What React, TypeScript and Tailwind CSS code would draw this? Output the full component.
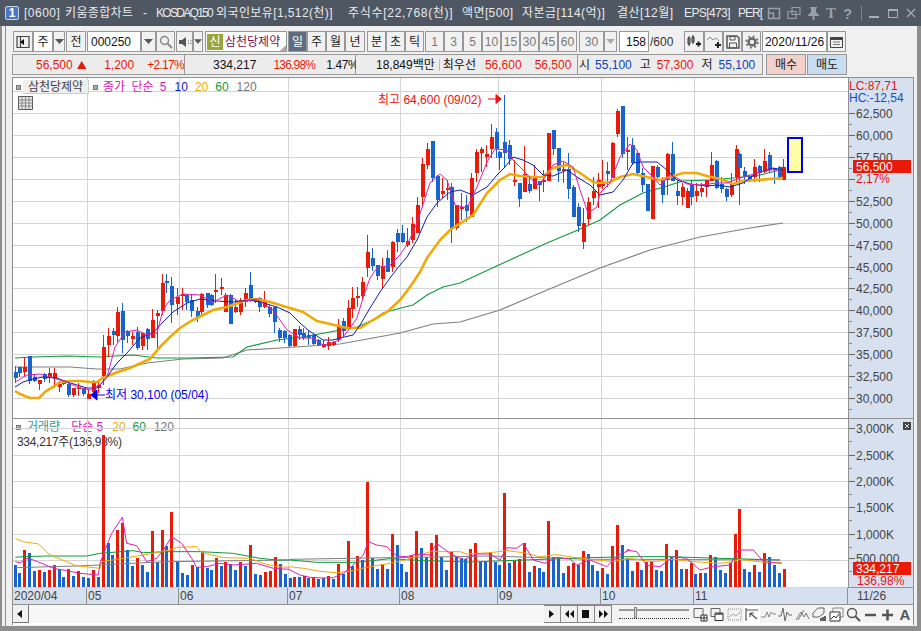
import React from "react";

const RED = "#ea1a08";
const BLUE = "#1763cf";
const FONT = "[font-family:'Liberation_Sans','Noto_Sans_CJK_KR',sans-serif]";

type Candle = { x: number; t: number; b: number; h: number; l: number; r: boolean };
const parseC = (ox: number, oy: number, s: string): Candle[] =>
  s.trim().split(/\s+/).map((e) => {
    const m = e.match(/^(\d+)([rb])(-?\d+),(-?\d+),(-?\d+),(-?\d+)$/)!;
    return {
      x: ox + +m[1] / 3,
      r: m[2] === "r",
      t: oy + +m[3] / 3,
      b: oy + +m[4] / 3,
      h: oy + +m[5] / 3,
      l: oy + +m[6] / 3,
    };
  });

const candles: Candle[] = [
  ...parseC(0, 270, `45b305,325,288,340 58b292,308,290,320 73r290,305,262,318 88b258,332,258,342 103b322,332,312,335 118r330,342,330,360 133b312,328,308,335 148r308,325,295,340 163r310,328,293,355 178r342,350,340,365 190b335,342,335,345 205b342,375,340,380 220r355,375,355,380 235r352,358,340,378 250b355,372,355,378 265r372,386,358,388 280r335,365,330,370 295r345,355,330,370 310r232,318,195,345 325r198,225,175,260 338b183,195,175,225 352r125,198,110,215 367b122,210,100,250 382b183,198,180,220 397r198,208,185,225 412b185,235,170,240 427r188,228,188,240 442b178,208,175,240 457r150,205,118,205 472r128,138,120,235 485r40,122,12,135 498b33,38,12,70 513b47,105,20,160 530r82,103,55,135 545r72,78,55,120 558b75,95,72,120 573b90,122,75,140 590b122,142,110,155 604r72,125,70,135 620b70,105,70,115 633b75,105,72,108 646r60,66,12,100 662r50,58,25,75 676r75,125,70,125 691b75,162,72,162 706r110,125,90,130 721r90,125,85,135 735r68,95,55,110 750b45,90,5,95 765r85,95,85,98 778b85,110,80,125 793r92,112,62,115 808b112,132,105,140 823b112,155,112,190 838b180,205,175,215 853b183,205,180,220 868b195,228,192,232 883r178,228,178,232`),
  ...parseC(90, 260, `628b207,225,197,240 640b220,235,205,240 655b225,235,210,255 670b225,252,222,255 685b240,255,238,258 700r252,260,240,265 715r245,258,232,270 730r245,255,243,257 745r195,240,178,245`),
  ...parseC(340, 235, `10b258,288,250,305 25r220,278,195,285 37r188,222,155,250 52r183,188,155,215 67r140,183,127,195 82r50,98,0,125 97b70,92,40,108 112b90,122,90,135 127r93,133,70,158 142b70,110,45,112 157r20,95,18,110`),
  ...parseC(340, 90, `172b430,455,418,485 185b430,455,405,460 200r452,465,415,470 215r403,450,380,460 230r345,430,320,430 245r222,320,205,350 260r178,225,160,237 275b153,265,153,275 290b258,330,255,350 305r303,312,265,325 320r293,298,270,330 332b292,415,278,458 347r345,415,345,420 362r352,358,310,390 377b345,362,315,395 392r265,380,250,382 407r187,250,178,275 422r177,188,170,245 437r192,200,165,230 452r142,178,102,205 467b125,177,113,205 478b185,205,183,240 493b155,188,15,232 508b165,208,150,225 523r270,275,210,288 538b278,327,278,352 553r252,305,168,305 568b282,302,265,310 583r265,296,225,297 598b272,285,272,332 610r270,272,240,305 625r128,272,128,272 640b120,178,120,195 655b173,242,173,275 670r237,243,215,278 685b237,296,188,328 700b290,380,285,380 715b350,408,338,425 730r400,455,355,477 745r337,388,320,405 758r303,325,262,345 773r270,290,250,355`),
  ...parseC(600, 90, `5r280,288,210,298 22b242,253,215,290 37r160,265,155,265 52r62,132,58,140 67b48,192,48,205 82r180,187,140,240 97b165,218,143,225 110b188,250,185,258 125b250,285,235,305 140b282,362,282,362 155r228,388,228,388 170b232,262,225,270 185b268,315,262,340 200r192,270,190,315 215b192,272,155,272 230b303,318,270,345 245r292,322,278,345 260r303,355,295,355 272b285,322,270,345 287r303,318,280,335 302r293,305,278,320 317r270,290,270,320 332r225,272,185,272 347b212,295,210,298 362b283,297,260,310 377b298,320,295,332 392r283,315,250,320 407r178,262,165,280 417b192,235,190,345 433b243,258,232,282 448b258,270,255,275 463r232,260,208,275 478b228,250,225,275 493r213,245,178,250 508b195,240,185,250 523b235,240,235,282 538b230,265,228,270 550r232,270,208,270`),
];

const parseV = (ox: number, oy: number, s: string) =>
  s.trim().split(/\s+/).map((e) => {
    const m = e.match(/^(\d+)([rb])(-?\d+)$/)!;
    return { x: ox + +m[1] / 3, r: m[2] === "r", t: oy + +m[3] / 3 };
  });

const volumes = [
  ...parseV(0, 500, `46b195 58b218 73r150 88b158 103b212 118r210 133b215 148r210 163r195 178b207 190b230 205r207 220b228 235r212 250b230 265b233 280r210 295b230 310r-195 325b128 337b165 352r90 367r70 382b150 397b197 412r173 427b195 442b215 457r92 472b185 485r90 498b137 513r36 530b185 545b218 560b225 575r195 590b200 605r155 620b204 632b210 647r173 662b197 676r185 691b193 706b210 721r185 736b197 751r135 766b222 779b225 794r215 809r212 824r170 839b192 854b222 869b233`),
  ...parseV(290, 480, `0b293 13r291 28b290 41r287 55b293 70r293 85b297 100b295 115r288 130b297 145r252 160b283 175r183 187b258 202r228 217b240 232r5 247b233 262b267 277r252 292b267 307r162 322b195 334b252 349b276 364r225 379r153 394b204 409b230 424r189 439r165 454b230 469b270 482r215 497b230 512b235 526b238 541r207 556r189 571b245 586b245 601r216 616b245 628b255 643r39 658b249 673r242 688r237 703r189 718b276 733r258 748b264 760b276 775r123 790b232 805b238 820b279 835r258 850r250 865b255 880r213 895b222 907b255 922b273 937r264 952b282 967r198 982r135 997b195`),
  ...parseV(620, 500, `7b135 22b175 37b213 52r185 64b210 79r185 94r182 109b210 124b213 139r132 154b170 169r150 184b207 199r207 212r190 226b222 241r218 256b218 271r165 286b172 301b210 316b218 331r190 346r102 358r27 373b207 388b215 403r195 418b215 433r158 448b172 463b195 478b218 491r207`),
];

const pts = (a: number[]) => {
  let s = "";
  for (let i = 0; i < a.length; i += 2) s += `${a[i]},${a[i + 1]} `;
  return s;
};
const zp = (ox: number, oy: number, a: number[]) => {
  const r: number[] = [];
  for (let i = 0; i < a.length; i += 2) r.push(ox + a[i] / 3, oy + a[i + 1] / 3);
  return r;
};

const ORANGE = [15,391,20,394,30,398,39,398,46,391,55,386,60,382,70,381,80,381,90,382,97,382,103,378,115,373,130,368,150,359,160,347,170,337,180,328,193,320,213,310,227,307,247,300,257,299,270,302,290,308,303,312,317,321,330,324,347,328,360,328,373,320,387,312,400,300,410,287,420,272,427,258,440,240,450,230,473,215,487,193,500,180,510,174,520,176,530,177,543,177,553,168,567,165,580,173,593,182,600,183,610,182,620,177,633,174,647,177,660,180,673,176,683,173,697,173,707,176,720,179,733,184,743,181,757,180,783,178];
const NAVY = [15,387,23,382,33,379,43,377,57,378,67,382,77,385,87,388,97,388,107,377,117,363,127,353,140,338,153,333,163,322,173,312,187,303,200,299,217,301,233,302,250,300,260,302,277,307,290,313,300,323,308,330,317,336,323,340,333,340,340,338,353,335,360,325,370,308,380,292,390,278,400,265,407,257,417,240,427,217,437,203,450,192,460,190,473,195,487,187,497,175,505,167,513,157,523,160,533,165,543,175,553,176,567,170,577,177,590,185,600,195,613,192,623,180,633,163,640,162,657,162,667,170,677,180,690,184,707,186,717,185,730,187,743,183,757,173,773,168,783,170];
const MAG = [15,382,27,375,40,374,53,378,67,382,77,387,90,390,100,385,107,377,115,347,125,332,137,330,147,335,157,333,163,310,170,300,183,294,200,295,213,302,227,295,240,302,257,299,273,310,287,330,300,338,313,338,323,345,333,343,343,337,350,328,357,318,363,298,370,278,377,268,390,265,400,255,408,243,417,223,430,183,440,174,447,180,455,205,467,208,477,187,487,162,495,149,507,150,513,160,523,170,537,185,543,180,553,165,563,161,573,167,580,190,588,213,597,207,600,193,610,183,620,157,630,144,637,150,643,167,653,177,660,185,670,175,677,178,687,184,700,185,717,183,727,183,740,178,757,173,770,170,780,170];
const GREEN = [15,358,33,357,67,356,100,357,133,355,157,358,190,358,233,357,247,347,277,340,303,337,330,332,340,330,357,327,373,320,383,313,397,309,413,305,427,295,443,287,460,283,512,259,547,243,578,230,600,220,620,205,643,193,667,186,683,181,710,180,733,178,760,175,780,170];
const GRAY = [15,367,70,367,97,369,120,369,147,363,183,359,223,358,247,350,280,348,340,344,373,338,400,333,433,324,460,322,500,310,540,293,600,268,650,250,700,237,750,228,783,223];

const vMag = [...zp(0,500,[46,185,60,188,80,175,100,180,130,192,160,205,200,212,240,220,295,225,300,190,315,150,335,100,367,52,380,130,410,137,440,185,470,175,490,150,515,110,545,130,575,175,590,202,620,200,660,190,700,195,770,190,820,205,869,208]),...zp(290,480,[0,270,30,285,60,292,100,294,130,293,160,280,190,255,220,225,235,185,260,195,290,200,320,228,350,230,380,222,420,225,440,190,480,220,520,240,560,222,600,222,630,240,650,203,680,205,700,190,730,240,765,250,800,232,840,237,860,255,900,240,950,260,985,225,1020,210]),...zp(620,500,[20,150,50,155,80,195,120,200,160,170,200,175,240,210,280,200,330,195,355,150,400,150,430,185,485,190])];
const vOra = [...zp(0,500,[46,115,70,125,115,132,150,165,200,185,228,197,300,205,305,185,370,175,430,165,510,150,530,142,590,140,605,158,670,173,750,175,790,190,830,200,869,202]),...zp(290,480,[0,260,40,265,90,274,140,278,190,272,230,262,300,250,345,240,420,215,470,215,510,215,530,222,600,218,650,212,700,218,750,230,800,224,850,232,900,238,970,245,1020,235]),...zp(620,500,[60,180,100,185,160,178,220,185,300,190,340,185,360,178,430,187,485,187])];
const vGrn = [...zp(0,500,[46,172,70,170,140,168,260,168,300,160,400,152,430,158,500,155,600,155,700,160,780,175,830,180,869,180]),...zp(290,480,[0,240,80,247,200,247,300,236,400,242,540,246,700,240,900,233,1020,230]),...zp(620,500,[110,170,150,170,300,175,480,180])];
const vGry = [...zp(0,500,[46,203,230,198,300,195,390,190,510,185,869,180]),...zp(290,480,[0,238,300,233,500,230,600,228,900,238,1020,238]),...zp(620,500,[480,180])];

const MONTHS = [87, 179, 288, 400, 498, 601, 694];
const PRICES: [string, number][] = [["62,500",113],["60,000",135],["57,500",157],["",179],["52,500",201],["50,000",223],["47,500",245],["45,000",267],["42,500",288],["40,000",310],["37,500",332],["35,000",354],["32,500",376],["30,000",398]];
const VOLS: [string, number][] = [["3,000K",428],["2,500K",455],["2,000K",481],["1,500K",507],["1,000K",534],["500,000",558]];

function Btn({ w, children, className = "", bg = "bg-[#f1f1f1]" }: { w: string; children?: React.ReactNode; className?: string; bg?: string }) {
  return <div className={`${w} ${bg} h-full shrink-0 border border-[#989898] flex items-center justify-center ${className}`}>{children}</div>;
}
const Drop = ({ c = "#555" }: { c?: string }) => (
  <svg width="9" height="5" viewBox="0 0 9 5"><path d="M0 0h9L4.5 5z" fill={c} /></svg>
);
const I = ({ children, w = 15, h = 15 }: { children: React.ReactNode; w?: number; h?: number }) => (
  <svg width={w} height={h} viewBox={`0 0 ${w} ${h}`} fill="none">{children}</svg>
);

function PricePlot() {
  return (
    <svg viewBox="13 78 835 340" width="835" height="340" className="block shrink-0">
      <g shapeRendering="crispEdges">
        {PRICES.map(([, y]) => <rect key={y} x="13" y={y} width="835" height="1" fill="#d4d4d4" />)}
        <rect x="13" y="91" width="835" height="1" fill="#d4d4d4" />
        {MONTHS.map((x) => <rect key={x} x={x} y="78" width="1" height="340" fill="#d4d4d4" />)}
      </g>
      <polyline points={pts(GRAY)} fill="none" stroke="#808080" strokeWidth="1.2" />
      <polyline points={pts(GREEN)} fill="none" stroke="#0f9a3c" strokeWidth="1.1" />
      <g shapeRendering="crispEdges">
        {candles.map((c, i) => {
          const x = Math.round(c.x);
          return (
            <g key={i} fill={c.r ? RED : BLUE}>
              <rect x={x} y={c.h} width="1" height={Math.max(1, c.l - c.h)} />
              <rect x={x - 1.5} y={c.t} width="4" height={Math.max(2, c.b - c.t)} />
            </g>
          );
        })}
      </g>
      <polyline points={pts(ORANGE)} fill="none" stroke="#f0aa08" strokeWidth="2.6" />
      <polyline points={pts(NAVY)} fill="none" stroke="#1020b0" strokeWidth="1" />
      <polyline points={pts(MAG)} fill="none" stroke="#e020b0" strokeWidth="1" />
      <rect x="788" y="138" width="14" height="34" fill="#ffffa8" stroke="#0000f0" strokeWidth="2" shapeRendering="crispEdges" />
      <path d="M488 99h8M496 94.5l5 4.5-5 4.5z" stroke="#f01010" fill="#f01010" strokeWidth="1" />
      <path d="M105 395H97M97 390l-6 5 6 5z" stroke="#0000f0" fill="#0000f0" strokeWidth="1" />
    </svg>
  );
}

function VolPlot() {
  return (
    <svg viewBox="13 419 835 169" width="835" height="169" className="block shrink-0 relative">
      <g shapeRendering="crispEdges">
        {[428,455,481,507,534,560].map((y) => <rect key={y} x="13" y={y} width="835" height="1" fill="#d4d4d4" />)}
        {MONTHS.map((x) => <rect key={x} x={x} y="419" width="1" height="169" fill="#d4d4d4" />)}
        <rect x="13" y="587" width="835" height="1" fill="#d4d4d4" />
        {volumes.map((v, i) => (
          <rect key={i} x={Math.round(v.x) - 1} y={Math.max(435, v.t)} width="3" height={587 - Math.max(435, v.t)} fill={v.r ? RED : BLUE} />
        ))}
      </g>
      <polyline points={pts(vGry)} fill="none" stroke="#808080" strokeWidth="1" />
      <polyline points={pts(vGrn)} fill="none" stroke="#0f9a3c" strokeWidth="1" />
      <polyline points={pts(vOra)} fill="none" stroke="#f0aa08" strokeWidth="1" />
      <polyline points={pts(vMag)} fill="none" stroke="#e020b0" strokeWidth="1" />
    </svg>
  );
}

const AxisTicks = ({ rows, minor }: { rows: [string, number][]; minor: number }) => (
  <>
    {rows.map(([label, y]) => (
      <g key={y}>
        <rect x="849" y={y} width="6" height="1" fill="#666" />
        <rect x="849" y={y + minor} width="3" height="1" fill="#888" />
        {label && <text x="856" y={y + 5} fontSize="12" fill="#444">{label}</text>}
      </g>
    ))}
  </>
);

const TITLE: [string, string][] = [
  ["[0600]", "w-[41px] tracking-[0.5px]"],
  ["키움종합차트", "w-[78px] tracking-[0.35px]"],
  ["-", "w-[13px]"],
  ["KOSDAQ150", "w-[60px] tracking-[-1.7px]"],
  ["외국인보유[1,512(천)]", "w-[132px] tracking-[0.4px]"],
  ["주식수[22,768(천)]", "w-[114px] tracking-[0.7px]"],
  ["액면[500]", "w-[60px] tracking-[0.4px]"],
  ["자본금[114(억)]", "w-[95px] tracking-[0.5px]"],
  ["결산[12월]", "w-[67px] tracking-[0.5px]"],
  ["EPS[473]", "w-[54px] tracking-[-0.6px]"],
  ["PER[", "w-[20px] tracking-[-1px]"],
];

export default function App() {
  return (
    <div className={`w-[921px] h-[631px] overflow-hidden bg-[#8e8e8e] flex flex-col text-[12px] leading-none text-[#222] ${FONT}`}>
      {/* title bar */}
      <div className="h-[26px] shrink-0 bg-[#4f5762] flex items-center pl-[5px] text-[#e8eaec] whitespace-pre">
        <div className="w-[14px] h-[14px] rounded-[2px] border border-[#c8d4ea] bg-[#4a78c0] text-white font-bold flex items-center justify-center text-[12px]">1</div>
        <div className="ml-[5px] w-[738px] shrink-0 flex">
          {TITLE.map(([t, c]) => <span key={t} className={`${c} shrink-0`}>{t}</span>)}
        </div>
        <div className="ml-[5px] flex items-center">
          <I w={14} h={14}><path d="M1.5 2.5h11v10h-11zM1.5 7h5v5.5" stroke="#98a0a8" strokeWidth="1.5" /></I>
          <div className="ml-[6px]"><I w={14} h={14}><path d="M5 1.5h8v7H5zM1 5.5h8v7H1z" stroke="#98a0a8" strokeWidth="1.2" /></I></div>
          <div className="ml-[6px]"><I w={13} h={14}><path d="M3 1h7v1l-1 1v3l3 3v1H7.500v4h-2v-4H1V9l3-3V3L3 2z" fill="#98a0a8" /></I></div>
          <span className="ml-[6px] text-[15px] font-bold text-[#98a0a8] [font-family:'Liberation_Serif',serif]">T</span>
          <span className="ml-[7px] text-[15px] font-bold text-[#98a0a8]">?</span>
          <div className="ml-[9px] w-px h-[15px] bg-[#7d848c]" />
          <div className="ml-[7px] mt-[8px] w-[10px] h-[2px] bg-[#a8aeb4]" />
          <div className="ml-[9px] w-[10px] h-[9px] border border-t-2 border-[#a8aeb4]" />
          <div className="ml-[8px]"><I w={10} h={10}><path d="M1 1l8 8M9 1l-8 8" stroke="#a8aeb4" strokeWidth="1.2" /></I></div>
        </div>
      </div>

      {/* body */}
      <div className="flex-1 min-h-0 ml-[2px] mr-[4px] mb-[5px] pl-[3px] bg-[#f0f0f0]">
        <div className="h-full border-l border-[#8e8e8e] pl-[6px] pr-[3px] flex flex-col">
          {/* toolbar 1 */}
          <div className="mt-[5px] h-[21px] shrink-0 flex items-stretch">
            <Btn w="w-[20px]" className="ml-[1px]">
              <I w={14} h={14}><path d="M1 1.500h12v11H1zM4.500 1.500v11" stroke="#444" strokeWidth="1.2" /><path d="M8 4v6L4 7z" fill="#111" /></I>
            </Btn>
            <Btn w="w-[20px]" bg="bg-white">주</Btn>
            <Btn w="w-[12px]"><Drop /></Btn>
            <Btn w="w-[20px]" className="ml-[1px]">전</Btn>
            <div className="ml-[1px] w-[54px] h-full border border-[#989898] bg-white flex items-center pl-[3px] text-[#111]">000250</div>
            <Btn w="w-[15px]"><Drop /></Btn>
            <Btn w="w-[19px]">
              <I w={14} h={14}><circle cx="5.500" cy="5.500" r="4" stroke="#888" strokeWidth="1.4" /><path d="M8.500 8.500L13 13" stroke="#888" strokeWidth="2" /></I>
            </Btn>
            <Btn w="w-[17px]" className="ml-[1px]">
              <I w={14} h={12}><path d="M1 4h3l4-3v10L4 8H1z" fill="#555" /><path d="M10 4.500h1v1h-1zM10 7h1v1h-1zM12.500 4.500h1v1h-1zM12.500 7h1v1h-1z" fill="#555" /></I>
            </Btn>
            <Btn w="w-[10px]"><Drop /></Btn>
            <div className="ml-[2px] w-[82px] h-full border border-[#989898] bg-white flex items-center pl-[1px] relative">
              <div className="w-[16px] h-[16px] bg-[#9aa43c] text-white flex items-center justify-center">신</div>
              <span className="ml-[2px] text-[#7c1050] whitespace-nowrap">삼천당제약</span>
              <div className="absolute right-0 bottom-0 w-0 h-0 border-l-[6px] border-l-transparent border-b-[6px] border-b-[#aaa]" />
            </div>
            <Btn w="w-[19px]" className="ml-[1px] text-white" bg="bg-[#5f6d7e]">일</Btn>
            <Btn w="w-[19px]">주</Btn>
            <Btn w="w-[19px]">월</Btn>
            <Btn w="w-[20px]">년</Btn>
            <Btn w="w-[19px]" className="ml-[2px]">분</Btn>
            <Btn w="w-[19px]">초</Btn>
            <Btn w="w-[19px]">틱</Btn>
            {["1", "3", "5", "10", "15", "30", "45", "60"].map((t, i) => (
              <Btn key={t} w="w-[19px]" className={`text-[#777] ${i === 0 ? "ml-[1px]" : ""}`}>{t}</Btn>
            ))}
            <Btn w="w-[25px]" className="ml-[2px] text-[#777]">30</Btn>
            <Btn w="w-[13px]"><Drop c="#aaa" /></Btn>
            <div className="ml-[2px] w-[30px] h-full border border-[#989898] bg-white flex items-center justify-end pr-[2px] text-[#111]">158</div>
            <span className="ml-[1px] w-[34px] self-center text-[#333]">/600</span>
            <Btn w="w-[20px]">
              <I w={16} h={14}><path d="M2 3h2v6H2zM6 2h2v5H6zM3 1v10M7 0v9" stroke="#333" strokeWidth="1" /><path d="M10 9h5M12.500 6.500v5" stroke="#222" strokeWidth="2" /></I>
            </Btn>
            <Btn w="w-[19px]">
              <I w={16} h={14}><path d="M1 5l3-3 3 3 3-2 3 3" stroke="#888" strokeWidth="1" /><path d="M9 10h6M12 7v6" stroke="#222" strokeWidth="2" /></I>
            </Btn>
            <Btn w="w-[19px]">
              <I w={14} h={14}><path d="M1 1h10l2 2v10H1z" stroke="#555" strokeWidth="1.5" /><path d="M4 1.500h5v3.500H4zM3.500 8h7v5h-7z" stroke="#555" strokeWidth="1" /></I>
            </Btn>
            <Btn w="w-[19px]">
              <I w={14} h={14}><circle cx="7" cy="7" r="3.500" stroke="#666" strokeWidth="2.500" /><circle cx="7" cy="7" r="5.800" stroke="#666" strokeWidth="1.600" strokeDasharray="2 2.550" /></I>
            </Btn>
            <div className="ml-[1px] w-[65px] h-full border border-[#989898] bg-white flex items-center justify-center text-[#111] whitespace-nowrap">2020/11/26</div>
            <Btn w="w-[19px]">
              <I w={13} h={12}><path d="M.500 1.500h12v10H.500z" stroke="#444" /><path d="M.500 1h12v3H.500z" fill="#444" /><path d="M3 6h7M3 8.500h7" stroke="#777" /></I>
            </Btn>
          </div>

          {/* toolbar 2 */}
          <div className="mt-[2px] h-[21px] shrink-0 flex items-stretch whitespace-nowrap">
            <div className="w-[173px] border border-[#989898] bg-[#ececec] flex items-center relative">
              <span className="ml-[23px] text-[#ea1a08]">56,500</span>
              <svg className="ml-[4px]" width="12" height="10" viewBox="0 0 12 10"><path d="M6 0L12 10H0z" fill="#ea1a08" /></svg>
              <span className="ml-[18px] text-[#ea1a08]">1,200</span>
              <span className="ml-[13px] text-[#ea1a08] tracking-[-0.7px]">+2.17%</span>
            </div>
            <div className="w-[171px] border border-l-0 border-[#989898] bg-[#ececec] flex items-center">
              <span className="ml-[28px] text-[#111]">334,217</span>
              <span className="ml-[17px] text-[#ea1a08] tracking-[-0.8px]">136.98%</span>
              <span className="ml-[11px] text-[#111] tracking-[-0.4px]">1.47%</span>
            </div>
            <div className="w-[222px] border border-l-0 border-[#989898] bg-[#ececec] flex items-center">
              <span className="ml-[20px] text-[#111]">18,849백만</span>
              <span className="ml-[4px] border-l border-[#bbb] pl-[3px] text-[#111]">최우선</span>
              <span className="ml-[9px] text-[#ea1a08]">56,600</span>
              <span className="ml-[13px] text-[#ea1a08]">56,500</span>
            </div>
            <div className="w-[185px] border border-l-0 border-[#989898] bg-[#ececec] flex items-center">
              <span className="ml-[1px]">시</span>
              <span className="ml-[5px] text-[#1040c0]">55,100</span>
              <span className="ml-[8px]">고</span>
              <span className="ml-[6px] text-[#ea1a08]">57,300</span>
              <span className="ml-[8px]">저</span>
              <span className="ml-[6px] text-[#1040c0]">55,100</span>
            </div>
            <div className="ml-[3px] w-[40px] border border-[#989898] bg-[#f4d0ca] flex items-center justify-center">매수</div>
            <div className="ml-[1px] w-[40px] border border-[#989898] bg-[#c8ddf2] flex items-center justify-center">매도</div>
          </div>

          {/* chart */}
          <div className="mt-[2px] w-[902px] border border-[#909090] border-b-0 bg-white flex flex-col flex-1 min-h-0">
            {/* price pane */}
            <div className="flex h-[340px] shrink-0 relative">
              <PricePlot />
              <div className="w-[65px] shrink-0 bg-[#d6e0ee] border-l border-[#909090]">
                <svg viewBox="849 78 64 340" width="64" height="340" className="block">
                  <g shapeRendering="crispEdges"><AxisTicks rows={PRICES} minor={11} /></g>
                  <text x="849" y="90" fontSize="12" fill="#ee1010">LC:87,71</text>
                  <text x="849" y="102" fontSize="12" fill="#1050d0">HC:-12,54</text>
                  <rect x="853" y="160" width="58" height="13" fill={RED} />
                  <text x="856" y="171" fontSize="12" fill="#fff">56,500</text>
                  <text x="856" y="183" fontSize="12" fill="#ee1010">2,17%</text>
                </svg>
              </div>
              {/* legends */}
              <div className="absolute left-[3px] top-[2px] flex items-center whitespace-nowrap [word-spacing:3px]">
                <div className="w-[5px] h-[5px] bg-[#aaa] border border-[#777]" />
                <div className="ml-[2px] w-[66px] h-[14px] bg-[#eeeeee] border-b border-r border-[#ccc] text-[#444] flex items-center justify-center">삼천당제약</div>
                <div className="ml-[4px] w-[5px] h-[5px] bg-[#aaa] border border-[#777]" />
                <span className="ml-[5px] text-[#d818b0]">종가 단순 5</span>
                <span className="ml-[8px] text-[#1020b0]">10</span>
                <span className="ml-[7px] text-[#f0aa08]">20</span>
                <span className="ml-[7px] text-[#0f9a3c]">60</span>
                <span className="ml-[8px] text-[#777]">120</span>
              </div>
              <div className="absolute left-[5px] top-[18px]">
                <I w={15} h={14}><path d="M.500.500h14v13H.500z" stroke="#555" fill="#e8e8e8" /><path d="M.500 4h14M.500 7h14M.500 10h14M4 .500v13M7.500 .500v13M11 .500v13" stroke="#888" /></I>
              </div>
              <span className="absolute left-[365px] top-[16px] text-[#f01010] whitespace-nowrap">최고 64,600 (09/02)</span>
              <span className="absolute left-[92px] top-[311px] text-[#0000f0] whitespace-nowrap">최저 30,100 (05/04)</span>
            </div>
            {/* volume pane */}
            <div className="flex h-[169px] shrink-0 border-t border-[#909090] relative">
              <div className="absolute left-[3px] top-[1px] flex items-center whitespace-nowrap h-[14px]">
                <div className="w-[5px] h-[5px] bg-[#aaa] border border-[#777]" />
                <span className="ml-[6px] text-[#2a9a90]">거래량</span>
                <span className="ml-[11px] text-[#d818b0]">단순 5</span>
                <span className="ml-[9px] text-[#f0aa08]">20</span>
                <span className="ml-[7px] text-[#0f9a3c]">60</span>
                <span className="ml-[8px] text-[#777]">120</span>
              </div>
              <span className="absolute left-[4px] top-[17px] text-[#333] whitespace-nowrap tracking-[-0.3px]">334,217주(136,98%)</span>
              <VolPlot />
              <div className="w-[65px] shrink-0 bg-[#d6e0ee] border-l border-[#909090]">
                <svg viewBox="849 419 64 168" width="64" height="168" className="block">
                  <g shapeRendering="crispEdges"><AxisTicks rows={VOLS} minor={13} /></g>
                  <rect x="853" y="562" width="58" height="13" fill={RED} />
                  <text x="856" y="573" fontSize="12" fill="#fff">334,217</text>
                  <text x="857" y="585" fontSize="12" fill="#ee1010">136,98%</text>
                  <rect x="903" y="422" width="8" height="8" fill="#444" />
                  <path d="M905 424l4 4M909 424l-4 4" stroke="#ddd" />
                </svg>
              </div>
            </div>
            {/* x axis */}
            <div className="h-[18px] shrink-0 flex bg-[#d6e0ee] border-y border-[#909090] text-[#444] whitespace-nowrap">
              {([["2020/04", "w-[74px]"], ["05", "w-[92px]"], ["06", "w-[109px]"], ["07", "w-[112px]"], ["08", "w-[98px]"], ["09", "w-[103px]"], ["10", "w-[93px]"], ["11", "w-[154px]"]] as const).map(([t, w]) => (
                <div key={t} className={`${w} shrink-0 border-r border-[#909090] flex items-center pl-[1px]`}>{t}</div>
              ))}
              <div className="flex-1 flex items-center pl-[9px]">11/26</div>
            </div>
            {/* bottom bar */}
            <div className="h-[18px] shrink-0 flex items-stretch bg-[#f3f3f3]">
              <div className="w-[16px] bg-[#f1f1f1] border-r border-b border-[#777] flex items-center justify-center">
                <svg width="6" height="8" viewBox="0 0 6 8"><path d="M5 0v8L0 4z" fill="#111" /></svg>
              </div>
              <div className="w-[516px] bg-[#f7f7f7]" />
              {[
                "M2 0v8l5-4z",
                "M5 0v8L1 4zM10 0v8L6 4z",
                "M1 0h7v8H1z",
                "M1 0v8l4-4zM6 0v8l4-4z",
              ].map((d) => (
                <div key={d} className="w-[17px] bg-[#f1f1f1] border border-l-0 border-[#888] flex items-center justify-center">
                  <svg width="11" height="8" viewBox="0 0 11 8"><path d={d} fill="#111" /></svg>
                </div>
              ))}
              <div className="w-[80px] flex flex-col items-center justify-center relative pl-[3px]">
                <div className="w-[70px] h-[2px] bg-[#999]" />
                <div className="absolute left-[22px] top-[2px] w-[3px] h-[11px] bg-[#d0d0d0] border border-[#888]" />
                <div className="w-[70px] h-[3px] mt-[5px] border-b border-dotted border-[#333]" />
              </div>
              <div className="flex-1 flex items-center gap-[1px] pl-[1px]">
                {[
                  <I key="a"><path d="M1 1.500h9v9H1z" stroke="#666" /><path d="M8 8h6v6H8zM11 8v6M8 11h6" stroke="#333" fill="#fff" /></I>,
                  <I key="b"><path d="M1 1.500h9v8H1z" stroke="#666" /><path d="M5 6h8v7.500H5z" stroke="#333" fill="#fff" /><path d="M5 6h8v2H5z" fill="#666" /></I>,
                  <I key="c"><path d="M1 2h13v11H1z" stroke="#888" strokeDasharray="1 1" /><path d="M2 10l4-3 3 2 4-4" stroke="#aaa" /></I>,
                  <I key="d"><path d="M2 1v12h1M2 3h12M6 6l7 6M6 6h4M6 6v4" stroke="#555" strokeWidth="1.200" /></I>,
                  <I key="e"><path d="M0 10h4l2-5 2 5 2-5 2 2h3" stroke="#888" /></I>,
                  <I key="f"><path d="M0 9h3l2-8 2 13 2-9 2 3h3" stroke="#666" /></I>,
                  <I key="g"><path d="M1 13L6 5l3 5 2-4 3 6M3 13l6-10" stroke="#777" /></I>,
                  <I key="h"><path d="M1 6l5-5h6v5l-5 4H1z" stroke="#666" /><path d="M9 14v-3M11 14v-4M13 14v-5" stroke="#222" strokeWidth="1.400" /></I>,
                  <I key="i"><path d="M4 1h10v9H4z" stroke="#888" /><path d="M1 5h10v9H1z" stroke="#333" fill="#fff" /><path d="M2 12l3-3 2 2 3-4" stroke="#333" /></I>,
                  <I key="j"><circle cx="6" cy="6" r="4.500" stroke="#555" strokeWidth="1.400" /><path d="M9.500 9.500L14 14" stroke="#555" strokeWidth="2" /></I>,
                  <I key="k"><path d="M2 8h11" stroke="#555" strokeWidth="2.500" /></I>,
                  <I key="l"><path d="M2 8h11M7.500 2.500v11" stroke="#555" strokeWidth="2.500" /></I>,
                ].map((n, i) => (
                  <div key={i} className={`w-[16px] h-[17px] flex items-center justify-center ${i === 3 ? "bg-white" : ""}`}>{n}</div>
                ))}
                <div className="w-[16px] text-[15px] font-bold text-[#555] text-center">A</div>
              </div>
            </div>
          </div>
          <div className="h-[1px]" />
        </div>
      </div>
    </div>
  );
}
